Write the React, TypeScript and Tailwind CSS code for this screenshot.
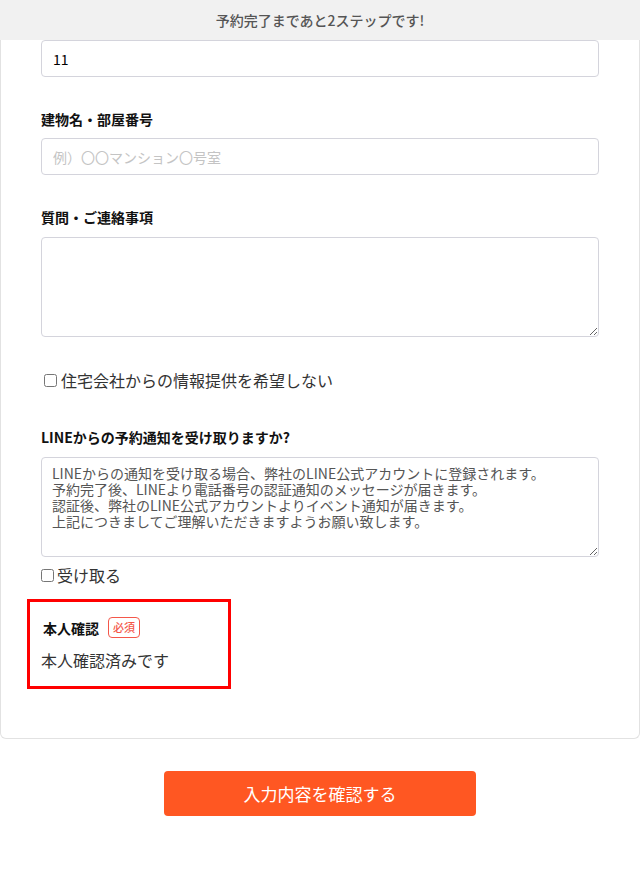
import React from 'react';

const lineText =
  'LINEからの通知を受け取る場合、弊社のLINE公式アカウントに登録されます。\n予約完了後、LINEより電話番号の認証通知のメッセージが届きます。\n認証後、弊社のLINE公式アカウントよりイベント通知が届きます。\n上記につきましてご理解いただきますようお願い致します。';

function Label({ children }: { children: React.ReactNode }) {
  return <div className="text-sm leading-5 font-bold text-[#111]">{children}</div>;
}

export default function App() {
  return (
    <div className="w-[640px] min-h-[895px] bg-white font-['Noto_Sans_CJK_JP','Noto_Sans',sans-serif]">
      <div className="h-10 bg-[#f1f1f1] text-center text-sm leading-10 font-medium text-[#555]">
        予約完了まであと2ステップです!
      </div>

      <div className="border-x border-b border-[#e2e2e2] rounded-b-md px-10 pb-[66px]">
        <input
          type="text"
          readOnly
          value="11"
          className="block w-full h-[37px] border border-[#d4d4dc] rounded px-[11px] text-sm text-black outline-none"
        />

        <div className="mt-[32px]">
          <Label>建物名・部屋番号</Label>
        </div>
        <input
          type="text"
          placeholder="例）〇〇マンション〇号室"
          className="mt-[9px] block w-full h-[37px] border border-[#d4d4dc] rounded px-[11px] text-sm text-black placeholder:text-[#c4c4c4] outline-none"
        />

        <div className="mt-[32px]">
          <Label>質問・ご連絡事項</Label>
        </div>
        <textarea
          className="mt-[10px] block w-full h-[100px] border border-[#d4d4dc] rounded px-[11px] py-2 text-sm outline-none"
        />

        <label className="mt-[31px] flex items-center text-base leading-6 text-[#333]">
          <input type="checkbox" className="ml-[3px] mr-[4px] w-[13px] h-[13px]" />
          住宅会社からの情報提供を希望しない
        </label>

        <div className="mt-[35px]">
          <Label>LINEからの予約通知を受け取りますか?</Label>
        </div>
        <textarea
          readOnly
          defaultValue={lineText}
          className="mt-[10px] block w-full h-[100px] border border-[#d4d4dc] rounded px-[10px] py-[7px] text-sm leading-4 text-[#555] outline-none"
        />
        <label className="mt-[6px] flex items-center text-base leading-6 text-[#333]">
          <input type="checkbox" className="ml-0 mr-[3px] w-[13px] h-[13px]" />
          受け取る
        </label>

        <div className="relative mt-[30px]">
          <div className="absolute -top-[18px] -left-[14px] w-[204px] h-[90px] border-[3px] border-[#ff0000]" />
          <div className="flex items-center h-[21px] pl-[2px]">
            <span className="text-sm leading-5 font-bold text-[#111]">本人確認</span>
            <span className="ml-[9px] h-[21px] flex items-center border border-[#f4574a] rounded px-[4px] text-[11px] font-medium text-[#f4574a]">
              必須
            </span>
          </div>
          <div className="mt-[10px] text-base leading-6 text-[#333]">本人確認済みです</div>
        </div>
      </div>

      <div className="mt-[32px] flex justify-center">
        <button className="w-[312px] h-[45px] rounded bg-[#ff5722] text-white text-[17px]">
          入力内容を確認する
        </button>
      </div>
    </div>
  );
}
